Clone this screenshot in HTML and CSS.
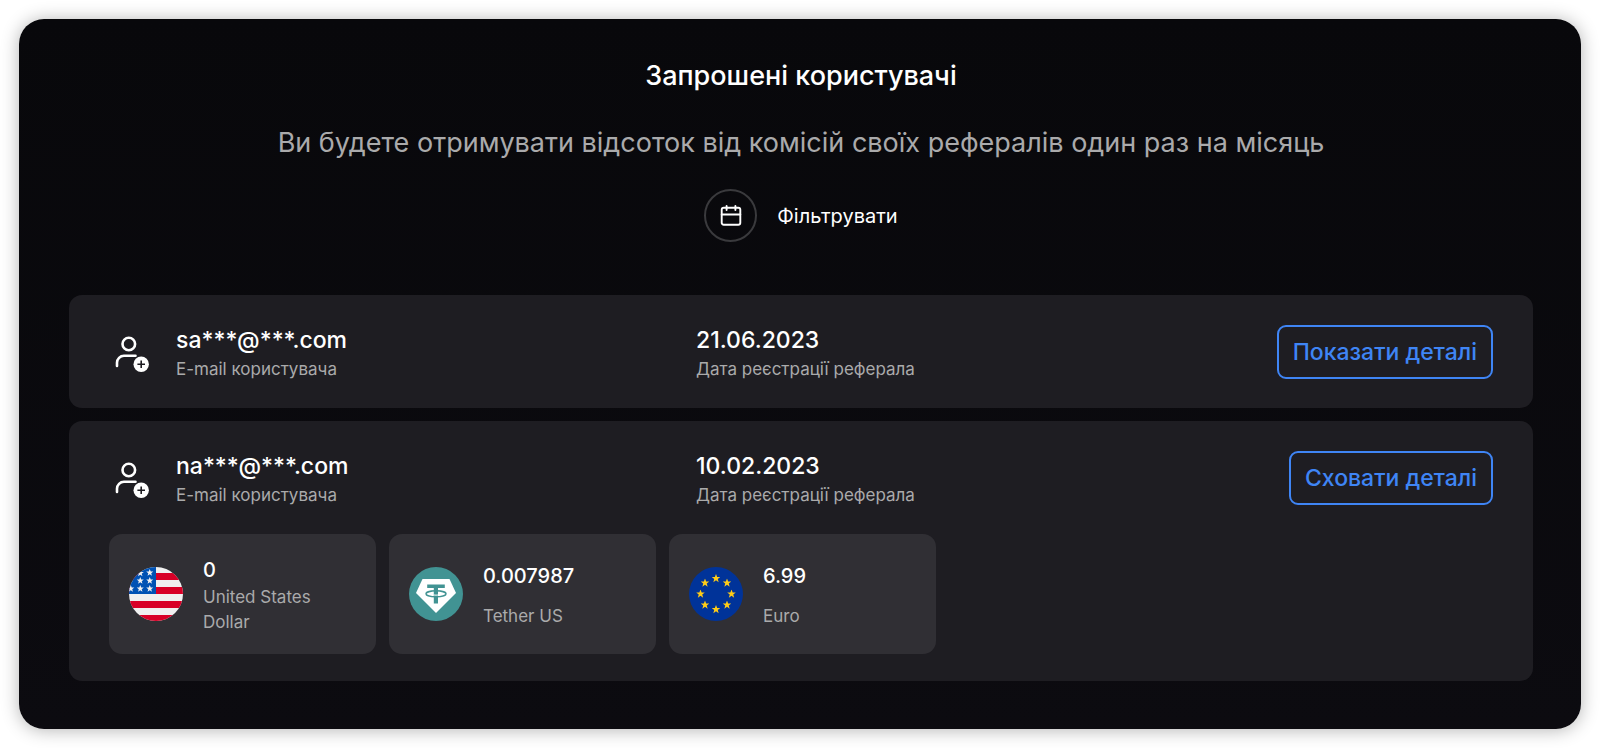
FILE: index.html
```
<!DOCTYPE html>
<html lang="uk">
<head>
    <meta charset="UTF-8">
    <meta name="viewport" content="width=device-width, initial-scale=1.0">
    <title>Запрошені користувачі</title>
    <link rel="stylesheet" href="styles.css">
</head>
<body>
    <!-- Shared icon shapes -->
    <svg class="sprite" aria-hidden="true">
        <symbol id="star" viewBox="-10 -10 20 20">
            <path d="M0-10 2.6-3.2 9.5-3.1 3.9 1.2 5.9 8.1 0 4.1-5.9 8.1-3.9 1.2-9.5-3.1-2.6-3.2Z"/>
        </symbol>
        <symbol id="user-add" viewBox="0 0 40 42">
            <circle cx="19.8" cy="13" r="6.3" fill="none" stroke="#fff" stroke-width="2.6"/>
            <path d="M8 35v-3.2a7 7 0 0 1 7-7h11.5" fill="none" stroke="#fff" stroke-width="2.6" stroke-linecap="round"/>
            <circle cx="32.2" cy="33.3" r="7.7" fill="#fff"/>
            <path d="M32.2 29.5v7.6M28.4 33.3h7.6" stroke="#1e1d22" stroke-width="1.6"/>
        </symbol>
    </svg>

    <main class="panel">
        <header class="panel-header">
            <h1>Запрошені користувачі</h1>
            <p>Ви будете отримувати відсоток від комісій своїх рефералів один раз на місяць</p>
            <button type="button" class="filter-btn">
                <span class="filter-icon">
                    <svg width="22" height="22" viewBox="0 0 22 22" fill="none" stroke="#fff" stroke-width="1.9" stroke-linecap="round">
                        <rect x="1.7" y="2.7" width="18.6" height="17" rx="2"/>
                        <path d="M1.7 9.5h18.6M6.6 1v4M15.4 1v4"/>
                    </svg>
                </span>
                Фільтрувати
            </button>
        </header>

        <section class="referrals">
            <article class="referral">
                <div class="referral-head">
                    <svg class="user-icon"><use href="#user-add"/></svg>
                    <div class="info">
                        <strong>sa***@***.com</strong>
                        <span>E-mail користувача</span>
                    </div>
                    <div class="info">
                        <strong>21.06.2023</strong>
                        <span>Дата реєстрації реферала</span>
                    </div>
                    <button type="button" class="details-btn">Показати деталі</button>
                </div>
            </article>

            <article class="referral">
                <div class="referral-head">
                    <svg class="user-icon"><use href="#user-add"/></svg>
                    <div class="info">
                        <strong>na***@***.com</strong>
                        <span>E-mail користувача</span>
                    </div>
                    <div class="info">
                        <strong>10.02.2023</strong>
                        <span>Дата реєстрації реферала</span>
                    </div>
                    <button type="button" class="details-btn">Сховати деталі</button>
                </div>

                <div class="currencies">
                    <div class="currency">
                        <svg class="coin" viewBox="0 0 54 54">
                            <clipPath id="round"><circle cx="27" cy="27" r="27"/></clipPath>
                            <g clip-path="url(#round)">
                                <path fill="#f0f0f0" d="M0 0h54v54H0z"/>
                                <path fill="#d80027" d="M0 6h54v7H0zM0 20h54v7H0zM0 34h54v7H0zM0 48h54v6H0z"/>
                                <path fill="#0052b4" d="M0 0h27v27H0z"/>
                                <g fill="#f0f0f0">
                                    <use href="#star" x="7.5" y="2.5" width="7.5" height="7.5"/>
                                    <use href="#star" x="17" y="2" width="7.5" height="7.5"/>
                                    <use href="#star" x="7.5" y="10" width="7.5" height="7.5"/>
                                    <use href="#star" x="17" y="10" width="7.5" height="7.5"/>
                                    <use href="#star" x="-2" y="18" width="7.5" height="7.5"/>
                                    <use href="#star" x="7.5" y="18" width="7.5" height="7.5"/>
                                    <use href="#star" x="17" y="18" width="7.5" height="7.5"/>
                                </g>
                            </g>
                        </svg>
                        <div class="amount">
                            <strong>0</strong>
                            <span>United States Dollar</span>
                        </div>
                    </div>

                    <div class="currency">
                        <svg class="coin" viewBox="0 0 54 54">
                            <circle cx="27" cy="27" r="27" fill="#419393"/>
                            <path fill="#fff" d="M13.5 12h27L47 26 27 46 7 26Z"/>
                            <path fill="#419393" d="M18.2 17.4h17.6v3.6H29v15.5h-4.2V21h-6.6z"/>
                            <ellipse cx="27" cy="26.8" rx="10" ry="3" fill="none" stroke="#419393" stroke-width="1.5"/>
                            <path d="M24.6 28q2.4.3 4.8 0" fill="none" stroke="#fff"/>
                        </svg>
                        <div class="amount">
                            <strong>0.007987</strong>
                            <span>Tether US</span>
                        </div>
                    </div>

                    <div class="currency">
                        <svg class="coin" viewBox="0 0 54 54">
                            <circle cx="27" cy="27" r="27" fill="#039"/>
                            <g fill="#ffcc17">
                                <use href="#star" x="22.5" y="7" width="9" height="9"/>
                                <use href="#star" x="33.5" y="11.5" width="9" height="9"/>
                                <use href="#star" x="38" y="22.5" width="9" height="9"/>
                                <use href="#star" x="33.5" y="33.5" width="9" height="9"/>
                                <use href="#star" x="22.5" y="38" width="9" height="9"/>
                                <use href="#star" x="11.5" y="33.5" width="9" height="9"/>
                                <use href="#star" x="7" y="22.5" width="9" height="9"/>
                                <use href="#star" x="11.5" y="11.5" width="9" height="9"/>
                            </g>
                        </svg>
                        <div class="amount">
                            <strong>6.99</strong>
                            <span>Euro</span>
                        </div>
                    </div>
                </div>
            </article>
        </section>
    </main>
</body>
</html>
```

FILE: styles.css
```
:root {
    --card: #1e1d22;
    --card-light: #302f34;
    --muted: #aaaaab;
    --blue: #3f85f5;
}

* {
    box-sizing: border-box;
}

body {
    margin: 0;
    padding: 19px;
    background: #fff;
    color: #fff;
    font-family: Inter, 'Liberation Sans', sans-serif;
}

.sprite {
    display: none;
}

.panel {
    padding: 37px 48px 48px 50px;
    border-radius: 25px;
    background: linear-gradient(#08080b, #0c0b10);
    box-shadow: 0 1px 18px rgba(0,0,0,0.3);
}

.panel-header {
    display: flex;
    flex-direction: column;
    align-items: center;
    margin-bottom: 53px;
}

h1 {
    margin: 0;
    font-size: 27px;
    font-weight: 500;
    line-height: 40px;
}

.panel-header p {
    margin: 27px 0 26px;
    color: var(--muted);
    font-size: 27px;
    line-height: 40px;
    text-align: center;
}

button {
    background: none;
    color: inherit;
    font: inherit;
    cursor: pointer;
}

.filter-btn {
    display: flex;
    align-items: center;
    gap: 20px;
    padding: 0;
    border: none;
    font-size: 20px;
}

.filter-icon {
    display: flex;
    align-items: center;
    justify-content: center;
    width: 53px;
    height: 53px;
    border: 2px solid #3a3a3d;
    border-radius: 50%;
}

.referrals {
    display: grid;
    gap: 13px;
}

.referral {
    border-radius: 13px;
    background: var(--card);
}

.referral-head {
    display: grid;
    grid-template-columns: 67px 520fr 520fr 277fr;
    align-items: center;
    padding: 26px 40px;
}

.user-icon {
    width: 40px;
    height: 42px;
}

.info {
    padding-top: 2px;
}

.info strong,
.info span,
.amount strong,
.amount span {
    display: block;
}

.info strong {
    font-size: 23px;
    font-weight: 500;
    line-height: 34px;
}

.info span,
.amount span {
    color: var(--muted);
    font-size: 17px;
    line-height: 25px;
}

.details-btn {
    justify-self: end;
    height: 54px;
    padding: 0 14px;
    border: 2px solid var(--blue);
    border-radius: 9px;
    color: var(--blue);
    font-size: 23px;
    font-weight: 500;
}

.currencies {
    display: grid;
    grid-template-columns: repeat(auto-fill, 267px);
    gap: 13px;
    padding: 0 40px 27px;
}

.currency {
    display: flex;
    align-items: center;
    gap: 20px;
    height: 120px;
    padding: 0 20px;
    border-radius: 13px;
    background: var(--card-light);
}

.coin {
    flex: none;
    width: 54px;
    height: 54px;
}

.amount {
    display: flex;
    flex-direction: column;
    justify-content: space-between;
    gap: 2px;
    min-height: 70px;
    padding-top: 4px;
}

.amount strong {
    font-size: 20px;
    font-weight: 500;
    line-height: 26px;
}
```
